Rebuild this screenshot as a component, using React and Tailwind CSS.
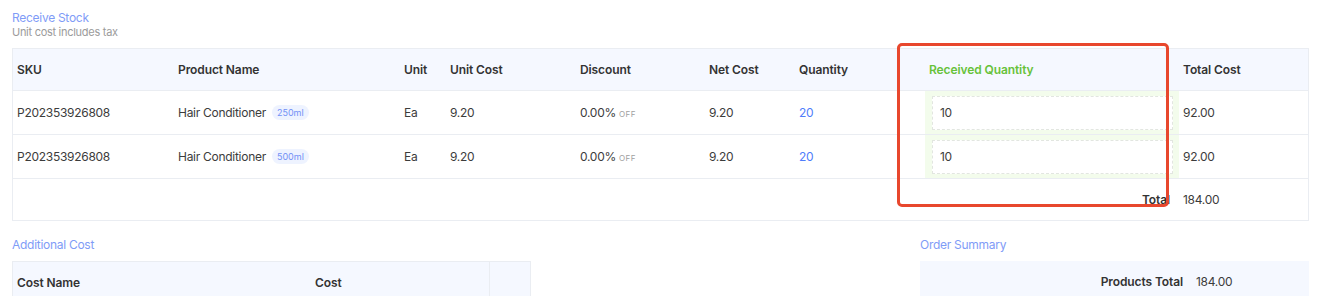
export default function App() {
  const cols = "grid grid-cols-[161px_226px_46px_130px_129px_90px_130px_254px_129px]";
  const rows = [
    { sku: "P202353926808", name: "Hair Conditioner", size: "250ml" },
    { sku: "P202353926808", name: "Hair Conditioner", size: "500ml" },
  ];
  return (
    <div className="relative w-[1338px] h-[296px] overflow-hidden bg-white pl-3 pt-[10px] font-[Inter,'Noto_Sans',sans-serif] text-[12px] tracking-[-0.28px] text-[#3c3c3c]">
      <div className="text-[12px] leading-[16px] text-[#7f9cf7]">Receive Stock</div>
      <div className="text-[11px] leading-[13px] text-[#9b9b9b]">Unit cost includes tax</div>

      <div className="relative mt-[9px] w-[1297px] border border-[#eaedf2]">
        <div className={`${cols} h-[42px] items-center bg-[#f5f8ff] border-b border-[#eaedf2] font-semibold tracking-[-0.1px] text-[#333]`}>
          <div className="pl-1">SKU</div>
          <div className="pl-1">Product Name</div>
          <div className="pl-1">Unit</div>
          <div className="pl-1">Unit Cost</div>
          <div className="pl-1">Discount</div>
          <div className="pl-1">Net Cost</div>
          <div className="pl-1">Quantity</div>
          <div className="pl-1 text-[#67c23a]">Received Quantity</div>
          <div className="pl-1">Total Cost</div>
        </div>
        {rows.map((r, i) => (
          <div key={i} className={`${cols} h-[44px] items-center border-b border-[#eaedf2]`}>
            <div className="pl-1">{r.sku}</div>
            <div className="pl-1 flex items-center gap-[6px]">
              <span>{r.name}</span>
              <span className="inline-flex items-center h-[15px] px-[5px] rounded-full bg-[#eef3ff] text-[9px] tracking-normal text-[#7391f6]">{r.size}</span>
            </div>
            <div className="pl-1">Ea</div>
            <div className="pl-1">9.20</div>
            <div className="pl-1 flex items-baseline gap-[3px]">
              <span>0.00%</span>
              <span className="text-[8px] tracking-[0.5px] text-[#a0a0a0]">OFF</span>
            </div>
            <div className="pl-1">9.20</div>
            <div className="pl-1 text-[#4f7dfb]">20</div>
            <div className="h-full flex items-center bg-[#f3fcec] pl-[7px] pr-[6px]">
              <div className="w-full h-[34px] flex items-center bg-white border border-dashed border-[#e2e6e0] pl-[7px]">10</div>
            </div>
            <div className="pl-1">92.00</div>
          </div>
        ))}
        <div className="grid grid-cols-[1166px_129px] h-[41px] items-center">
          <div className="text-right pr-[9px] font-semibold tracking-[-0.1px] text-[#333]">Total</div>
          <div className="pl-1">184.00</div>
        </div>
        <div className="pointer-events-none absolute left-[884px] top-[-6px] w-[272px] h-[164px] border-[3px] border-[#e8472d] rounded-[5px]" />
      </div>

      <div className="mt-4 flex w-[1297px] justify-between">
        <div>
          <div className="text-[12px] leading-[16px] text-[#7f9cf7]">Additional Cost</div>
          <div className="mt-2 w-[519px] border border-[#eaedf2]">
            <div className="grid grid-cols-[298px_178px_41px] h-[42px] items-center bg-[#f5f8ff] font-semibold tracking-[-0.1px] text-[#333]">
              <div className="pl-1">Cost Name</div>
              <div className="pl-1">Cost</div>
              <div className="h-full border-l border-[#eaedf2]" />
            </div>
          </div>
        </div>
        <div>
          <div className="text-[12px] leading-[16px] text-[#7f9cf7]">Order Summary</div>
          <div className="mt-2 w-[389px] bg-[#f5f8ff]">
            <div className="grid grid-cols-[263px_126px] h-[42px] items-center">
              <div className="text-right font-semibold tracking-[-0.1px] text-[#333]">Products Total</div>
              <div className="pl-[13px]">184.00</div>
            </div>
          </div>
        </div>
      </div>
    </div>
  );
}
